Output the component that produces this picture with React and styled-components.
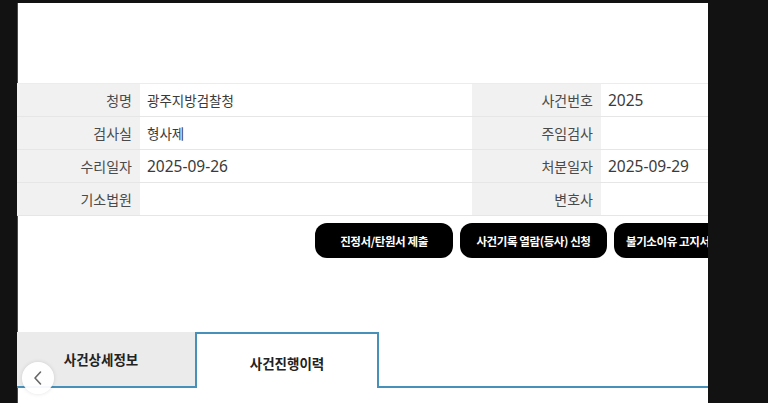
import React from 'react'
import styled, { createGlobalStyle } from 'styled-components'

const GlobalStyle = createGlobalStyle`
  html, body {
    margin: 0;
    padding: 0;
    background: #121212;
  }
  body {
    font-family: 'Noto Sans CJK KR', 'Noto Sans', sans-serif;
  }
`

const Screen = styled.div`
  height: 403px;
  padding: 3px 0 0 17px;
  box-sizing: border-box;
  overflow: hidden;
`

const Panel = styled.div`
  position: relative;
  width: 691px;
  height: 400px;
  background: #ffffff;
  overflow: hidden;
  box-shadow: inset 1px 0 0 #4a4a4a;
`

const Inner = styled.div`
  width: 747px;
  padding-top: 80px;
`

const InfoTable = styled.div`
  display: grid;
  grid-template-columns: 123px 332px 129px 163px;
  grid-auto-rows: 33px;
  border-top: 1px solid #ececec;
`

const Label = styled.div`
  display: flex;
  align-items: center;
  justify-content: flex-end;
  padding-right: 8px;
  background: #f1f1f1;
  color: #4a4a4a;
  font-size: 14px;
  border-bottom: 1px solid #e6e6e6;
`

const Value = styled.div`
  display: flex;
  align-items: center;
  padding-left: 7px;
  background: #ffffff;
  color: #3a3a3a;
  font-family: ${p => (p.$num ? "'Noto Sans', 'Noto Sans CJK KR', sans-serif" : "'Noto Sans CJK KR', sans-serif")};
  font-size: ${p => (p.$num ? '15.5px' : '13.5px')};
  border-bottom: 1px solid #e6e6e6;
`

const ActionRow = styled.div`
  display: flex;
  justify-content: flex-end;
  gap: 7px;
  margin-top: 7px;
`

const ActionButton = styled.button`
  width: ${p => p.$w}px;
  height: 35px;
  border: none;
  border-radius: 12px;
  background: #000000;
  color: #ffffff;
  font-family: 'Noto Sans CJK KR', sans-serif;
  font-size: 11.5px;
  font-weight: 700;
  letter-spacing: -0.4px;
  white-space: nowrap;
  overflow: hidden;
  padding: 0 12px;
  text-align: ${p => (p.$cut ? 'left' : 'center')};
  cursor: pointer;
`

const TabBar = styled.div`
  display: flex;
  align-items: flex-end;
  height: 54px;
  margin-top: 74px;
  border-bottom: 2px solid #4790ba;
`

const Tab = styled.div`
  box-sizing: border-box;
  display: flex;
  align-items: center;
  justify-content: center;
  width: ${p => p.$w}px;
  height: ${p => (p.$active ? '56px' : '54px')};
  margin-bottom: ${p => (p.$active ? '-2px' : '0')};
  padding: ${p => (p.$active ? '4px 0 0' : '0 10px 0 0')};
  background: ${p => (p.$active ? '#ffffff' : '#ebebeb')};
  border: ${p => (p.$active ? '2px solid #4790ba' : 'none')};
  border-bottom: none;
  color: #222222;
  font-size: 13.5px;
  font-weight: 700;
`

const BackButton = styled.button`
  position: absolute;
  left: 5px;
  top: 359px;
  width: 32px;
  height: 32px;
  border-radius: 50%;
  border: none;
  background: rgba(255, 255, 255, 0.95);
  box-shadow: 0 0 4px rgba(0, 0, 0, 0.12);
  display: flex;
  align-items: center;
  justify-content: center;
  padding: 0;
  cursor: pointer;
`

const rows = [
  ['청명', '광주지방검찰청', '사건번호', '2025'],
  ['검사실', '형사제', '주임검사', ''],
  ['수리일자', '2025-09-26', '처분일자', '2025-09-29'],
  ['기소법원', '', '변호사', ''],
]

const isNum = v => /^[\d-]+$/.test(v)

export default function App() {
  return (
    <>
      <GlobalStyle />
      <Screen>
        <Panel>
          <Inner>
            <InfoTable>
              {rows.map(r => (
                <React.Fragment key={r[0]}>
                  <Label>{r[0]}</Label>
                  <Value $num={isNum(r[1])}>{r[1]}</Value>
                  <Label>{r[2]}</Label>
                  <Value $num={isNum(r[3])}>{r[3]}</Value>
                </React.Fragment>
              ))}
            </InfoTable>
            <ActionRow>
              <ActionButton $w={138}>진정서/탄원서 제출</ActionButton>
              <ActionButton $w={147}>사건기록 열람(등사) 신청</ActionButton>
              <ActionButton $w={150} $cut>불기소이유 고지서 신청</ActionButton>
            </ActionRow>
            <TabBar>
              <Tab $w={178}>사건상세정보</Tab>
              <Tab $w={184} $active>사건진행이력</Tab>
            </TabBar>
          </Inner>
          <BackButton aria-label="이전">
            <svg width="12" height="16" viewBox="0 0 12 16" fill="none">
              <path d="M8.5 2 L3 8 L8.5 14" stroke="#666" strokeWidth="1.6" strokeLinecap="round" strokeLinejoin="round" />
            </svg>
          </BackButton>
        </Panel>
      </Screen>
    </>
  )
}
